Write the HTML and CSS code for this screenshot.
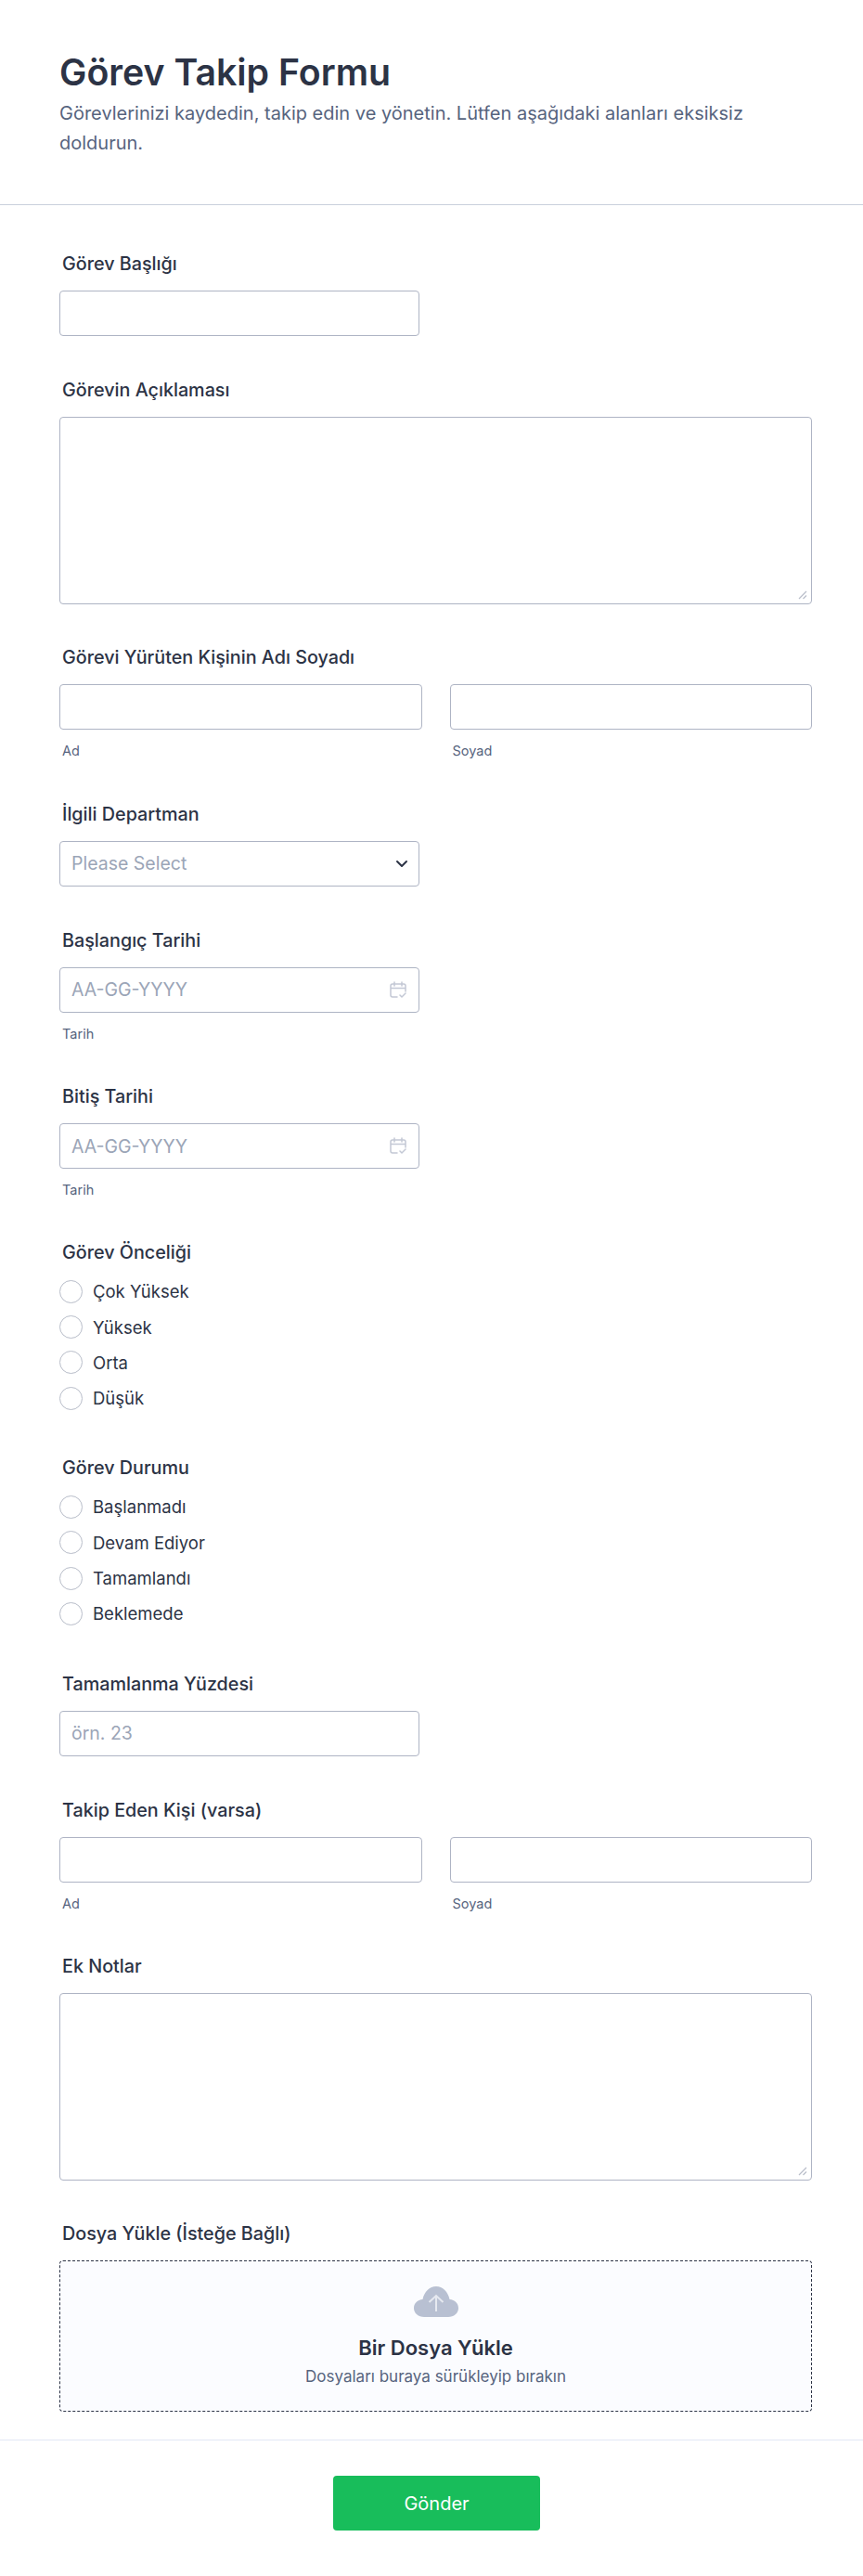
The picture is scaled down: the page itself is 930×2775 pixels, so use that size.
FILE: index.html
```html
<!DOCTYPE html>
<html lang="tr">
<head>
<meta charset="utf-8">
<title>Görev Takip Formu</title>
<link rel="stylesheet" href="styles.css">
</head>
<body>
<form class="form">
  <header class="form-header">
    <h1 class="form-title">Görev Takip Formu</h1>
    <p class="form-subtitle">Görevlerinizi kaydedin, takip edin ve yönetin. Lütfen aşağıdaki alanları eksiksiz doldurun.</p>
  </header>
  <div class="form-body">
    <div class="field">
      <label class="label">Görev Başlığı</label>
      <input class="control control-half" type="text">
    </div>
    <div class="field field-area">
      <label class="label">Görevin Açıklaması</label>
      <div class="control-wrap">
        <textarea class="control control-area"></textarea>
        <svg class="resize-icon" width="10" height="10" viewBox="0 0 10 10" aria-hidden="true"><path d="M1 9l8-8M5.500 9L9 5.500" fill="none" stroke="#b8bdc9" stroke-width="1.200"/></svg>
      </div>
    </div>
    <div class="field">
      <label class="label">Görevi Yürüten Kişinin Adı Soyadı</label>
      <div class="name-row">
        <div><input class="control" type="text"><span class="sublabel">Ad</span></div>
        <div><input class="control" type="text"><span class="sublabel">Soyad</span></div>
      </div>
    </div>
    <div class="field">
      <label class="label">İlgili Departman</label>
      <div class="control-wrap control-half">
        <select class="control control-select"><option>Please Select</option></select>
        <svg class="select-icon" width="14" height="9" viewBox="0 0 14 9" aria-hidden="true"><path d="M2 2l5 5 5-5" fill="none" stroke="#2c3345" stroke-width="2" stroke-linecap="round" stroke-linejoin="round"/></svg>
      </div>
    </div>
    <div class="field">
      <label class="label">Başlangıç Tarihi</label>
      <div class="control-wrap control-half">
        <input class="control" type="text" placeholder="AA-GG-YYYY">
        <svg class="date-icon" width="18" height="19" viewBox="0 0 18 19" aria-hidden="true"><path d="M8 17H3a2 2 0 0 1-2-2V5a2 2 0 0 1 2-2h12a2 2 0 0 1 2 2v6M1 7.500h16M5 1v4M13 1v4M11 15l2 2 4-4" fill="none" stroke="#c3c8d5" stroke-width="1.500" stroke-linecap="round" stroke-linejoin="round"/></svg>
      </div>
      <span class="sublabel">Tarih</span>
    </div>
    <div class="field">
      <label class="label">Bitiş Tarihi</label>
      <div class="control-wrap control-half">
        <input class="control" type="text" placeholder="AA-GG-YYYY">
        <svg class="date-icon" width="18" height="19" viewBox="0 0 18 19" aria-hidden="true"><path d="M8 17H3a2 2 0 0 1-2-2V5a2 2 0 0 1 2-2h12a2 2 0 0 1 2 2v6M1 7.500h16M5 1v4M13 1v4M11 15l2 2 4-4" fill="none" stroke="#c3c8d5" stroke-width="1.500" stroke-linecap="round" stroke-linejoin="round"/></svg>
      </div>
      <span class="sublabel">Tarih</span>
    </div>
    <div class="field field-radios">
      <label class="label label-radios">Görev Önceliği</label>
      <label class="radio"><input type="radio" name="oncelik"><span>Çok Yüksek</span></label>
      <label class="radio"><input type="radio" name="oncelik"><span>Yüksek</span></label>
      <label class="radio"><input type="radio" name="oncelik"><span>Orta</span></label>
      <label class="radio"><input type="radio" name="oncelik"><span>Düşük</span></label>
    </div>
    <div class="field field-radios">
      <label class="label label-radios">Görev Durumu</label>
      <label class="radio"><input type="radio" name="durum"><span>Başlanmadı</span></label>
      <label class="radio"><input type="radio" name="durum"><span>Devam Ediyor</span></label>
      <label class="radio"><input type="radio" name="durum"><span>Tamamlandı</span></label>
      <label class="radio"><input type="radio" name="durum"><span>Beklemede</span></label>
    </div>
    <div class="field">
      <label class="label">Tamamlanma Yüzdesi</label>
      <input class="control control-half" type="text" placeholder="örn. 23">
    </div>
    <div class="field">
      <label class="label">Takip Eden Kişi (varsa)</label>
      <div class="name-row">
        <div><input class="control" type="text"><span class="sublabel">Ad</span></div>
        <div><input class="control" type="text"><span class="sublabel">Soyad</span></div>
      </div>
    </div>
    <div class="field field-area">
      <label class="label">Ek Notlar</label>
      <div class="control-wrap">
        <textarea class="control control-area"></textarea>
        <svg class="resize-icon" width="10" height="10" viewBox="0 0 10 10" aria-hidden="true"><path d="M1 9l8-8M5.500 9L9 5.500" fill="none" stroke="#b8bdc9" stroke-width="1.200"/></svg>
      </div>
    </div>
    <div class="field field-last">
      <label class="label">Dosya Yükle (İsteğe Bağlı)</label>
      <div class="upload">
        <svg class="upload-icon" width="48" height="33" viewBox="0 0 48 33" aria-hidden="true"><path d="M11 33C5 33 0 29 0 23.500S4 14.500 9.500 14C11 6 17 0 24 0s13 6 14.500 14C44 14.500 48 18 48 23.500S43 33 37 33z" fill="#b8c0d2"/><path d="M24 27V10M16.500 17L24 10l7.500 7" fill="none" stroke="#e6e9f0" stroke-width="2"/></svg>
        <div class="upload-title">Bir Dosya Yükle</div>
        <div class="upload-text">Dosyaları buraya sürükleyip bırakın</div>
      </div>
    </div>
  </div>
  <footer class="form-footer">
    <button class="submit" type="button">Gönder</button>
  </footer>
</form>
</body>
</html>
```

FILE: styles.css
```css
* { box-sizing: border-box; }
html, body { margin: 0; padding: 0; background: #fff; }
body { font-family: Inter, "Noto Sans", sans-serif; color: #2c3345; }
.form { width: 930px; height: 2775px; overflow: hidden; }
.form-header { padding: 54px 64px 50px; border-bottom: 1px solid #c9d0dc; height: 221px; }
.form-title { margin: 0 0 4px; font-size: 39.250px; line-height: 48px; font-weight: 600; color: #2c3345; }
.form-subtitle { margin: 0; font-size: 20px; line-height: 32px; color: #57647e; }
.form-body { padding: 49px 55px 0 64px; }
.field { margin-bottom: 44px; }
.field-area { margin-bottom: 43px; }
.field-radios { margin-bottom: 42px; }
.field-last { margin-bottom: 0; }
.label { display: block; padding-left: 3px; margin-bottom: 15px; font-size: 19.750px; line-height: 28px; font-weight: 450; color: #2c3345; }
.label-radios { margin-bottom: 8.500px; margin-top: -1px; padding-bottom: 1px; }
.control { display: block; width: 100%; height: 49px; margin: 0; padding: 0 12px; font-family: inherit; font-size: 19.500px; font-weight: 400; color: #2c3345; background: #fff; border: 1px solid #aeb4c4; border-radius: 4px; outline: 0; }
.control::placeholder { color: #9ba5b7; opacity: 1; }
.control-half { width: 388px; }
.control-area { height: 202px; padding: 12px; resize: none; }
.control-select { appearance: none; -webkit-appearance: none; color: #9ba5b7; }
.control-wrap { position: relative; }
.select-icon { position: absolute; right: 12px; top: 20px; }
.date-icon { position: absolute; right: 14px; top: 15px; }
.resize-icon { position: absolute; right: 5px; bottom: 5px; }
.name-row { display: grid; grid-template-columns: 1fr 1fr; gap: 30px; }
.sublabel { display: block; margin-top: 14px; padding-left: 3px; font-size: 14.500px; line-height: 18.500px; color: #57647e; }
.radio { display: flex; align-items: center; gap: 11px; height: 38.400px; font-size: 18.500px; color: #2c3345; }
.radio input { appearance: none; -webkit-appearance: none; flex: none; width: 25px; height: 25px; margin: 0; background: #fff; border: 1px solid #b8bdc9; border-radius: 50%; }
.upload { display: flex; flex-direction: column; align-items: center; height: 163px; padding-top: 27px; background: #fbfcff; border: 1px dashed #2c3345; border-radius: 4px; }
.upload-icon { display: block; }
.upload-title { margin-top: 18px; font-size: 22px; line-height: 30px; font-weight: 600; color: #2c3345; }
.upload-text { margin-top: 3px; font-size: 17px; line-height: 26px; color: #57647e; }
.form-footer { display: flex; justify-content: center; margin-top: 30px; padding: 38px 0 0 11px; border-top: 1px solid #e3e8f5; }
.submit { width: 223px; height: 59px; font-family: inherit; font-size: 20px; font-weight: 400; color: #fff; background: #18bd5b; border: 0; border-radius: 4px; }
```
